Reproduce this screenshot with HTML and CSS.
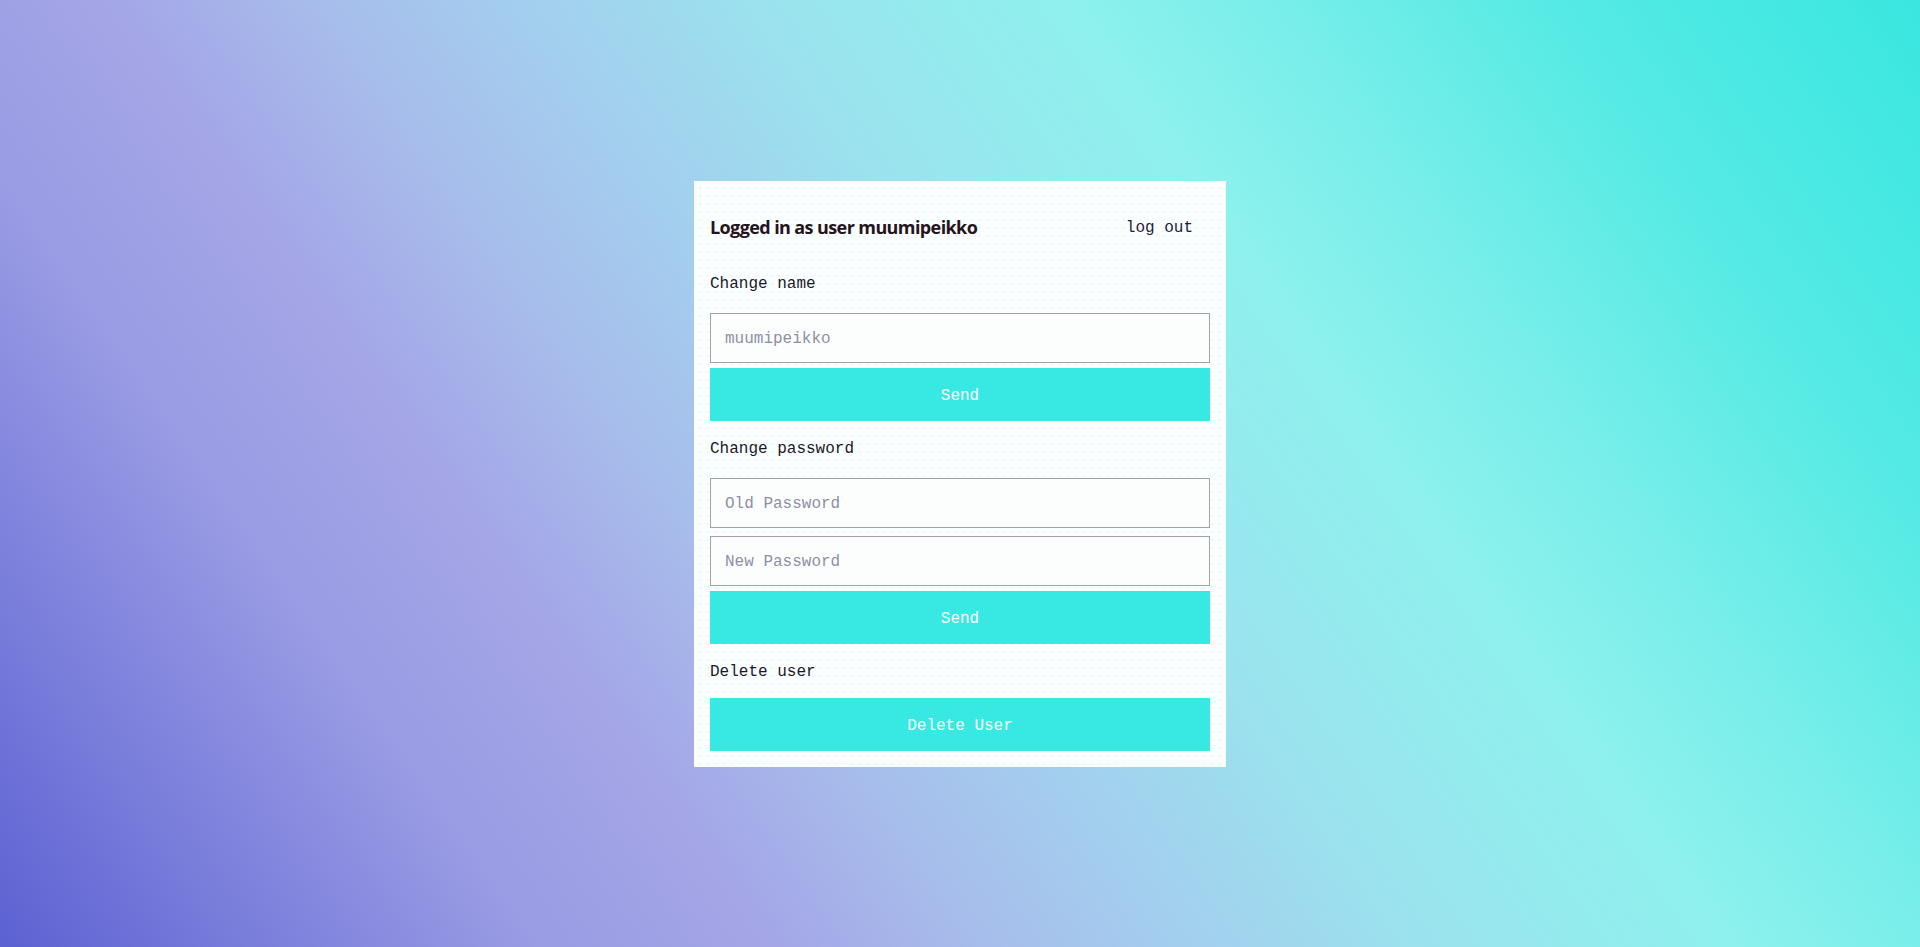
FILE: index.html
```html
<!DOCTYPE html>
<html lang="en">
<head>
<meta charset="utf-8">
<title>User settings</title>
<link rel="stylesheet" href="styles.css">
</head>
<body>
<main class="page">
  <section class="card">
    <header class="card-header">
      <h2 class="title">Logged in as user muumipeikko</h2>
      <button class="logout" type="button">log out</button>
    </header>

    <form class="section">
      <p class="label">Change name</p>
      <input class="field" type="text" placeholder="muumipeikko">
      <button class="btn" type="button">Send</button>
    </form>

    <form class="section">
      <p class="label">Change password</p>
      <input class="field" type="password" placeholder="Old Password">
      <input class="field" type="password" placeholder="New Password">
      <button class="btn" type="button">Send</button>
    </form>

    <form class="section">
      <p class="label">Delete user</p>
      <button class="btn" type="button">Delete User</button>
    </form>
  </section>
</main>
</body>
</html>
```

FILE: styles.css
```css
* { box-sizing: border-box; }

html, body {
  margin: 0;
  height: 100%;
}

body {
  font-family: "Liberation Mono", "DejaVu Sans Mono", monospace;
  background: linear-gradient(55deg,
    #5c61d3 0%,
    #7a7edb 10%,
    #9a9ce4 21%,
    #a4a6e7 30%,
    #a7bdeb 38%,
    #a3cfee 46%,
    #9ae4ee 56%,
    #8ef1ed 67%,
    #78eeea 75%,
    #55eae4 86%,
    #39e7e0 100%);
}

.page {
  height: 100%;
  display: flex;
  align-items: center;
  justify-content: center;
}

.card {
  width: 532px;
  padding: 16px;
  background-color: #fbfefe;
  background-image: radial-gradient(circle, #e2f7f7 0.6px, transparent 1px);
  background-size: 8px 8px;
  background-position: 2px 3px;
}

.card-header {
  height: 59px;
  padding-top: 2px;
  display: flex;
  align-items: center;
  justify-content: space-between;
}

.title {
  margin: 0;
  font-family: "Open Sans", "Noto Sans", sans-serif;
  font-weight: 700;
  font-size: 18px;
  letter-spacing: -0.6px;
  color: #24151c;
}

.logout {
  border: 0;
  background: transparent;
  padding: 2px 17px 0 0;
  font-family: "Liberation Mono", monospace;
  font-size: 16px;
  color: #1e1b3c;
  cursor: pointer;
}

.section {
  margin: 0;
  display: flex;
  flex-direction: column;
}

.label {
  margin: 19px 0 15px;
  font-size: 16px;
  line-height: 19px;
  color: #1b1828;
}

.field {
  margin: 4px 0;
  height: 50px;
  padding: 3px 14px 0;
  border: 1px solid #a7a09d;
  background: #fcfefe;
  font-family: "Liberation Mono", monospace;
  font-size: 16px;
  color: #333;
  outline: none;
}

.field::placeholder {
  color: #8f8ea6;
}

.btn {
  margin: 1px 0 0;
  height: 53px;
  padding-top: 4px;
  border: 0;
  background: #38e8e3;
  color: #ffffff;
  font-family: "Liberation Mono", monospace;
  font-size: 16px;
  cursor: pointer;
}
```
